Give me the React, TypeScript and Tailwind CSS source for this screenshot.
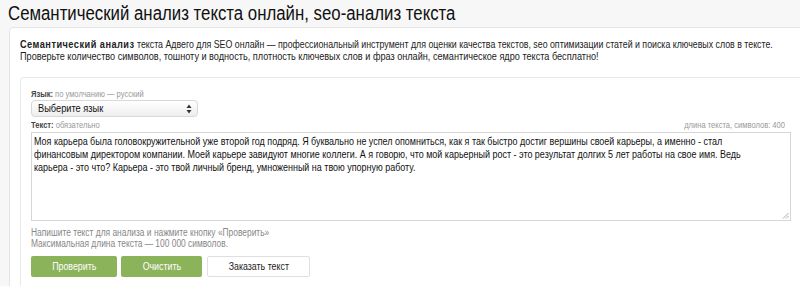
import React from "react";

const font = { fontFamily: "'Liberation Sans', Arial, sans-serif" };

export default function App() {
  return (
    <div className="w-[800px] h-[286px] overflow-hidden bg-[#f7f7f7] text-[#222]" style={font}>
      <div className="h-[27px] pl-[8px] pt-[2px] whitespace-nowrap">
        <h1 className="inline-block origin-left scale-x-[0.84] text-[20px] leading-[22px] text-[#111]">
          Семантический анализ текста онлайн, seo-анализ текста
        </h1>
      </div>
      <div className="ml-[9px] w-[820px] h-[300px] bg-white border border-[#e4e4e4] rounded-[4px] pl-[10px] pt-[10px]">
        <div className="text-[11px] leading-[12px] text-[#222] whitespace-nowrap">
          <p className="origin-left scale-x-[0.80]">
            <b className="text-[11.5px] tracking-[0.6px]">Семантический анализ</b> текста Адвего для SEO онлайн — профессиональный инструмент для оценки качества текстов, seo оптимизации статей и поиска ключевых слов в тексте.
          </p>
          <p className="origin-left scale-x-[0.83]">
            Проверьте количество символов, тошноту и водность, плотность ключевых слов и фраз онлайн, семантическое ядро текста бесплатно!
          </p>
        </div>
        <div className="mt-[15px] border border-[#e8e8e8] rounded-[4px] pl-[10px] pt-[9px] h-[260px]">
          <div className="h-[13px] flex items-center whitespace-nowrap">
            <span className="inline-block origin-left scale-x-[0.84] text-[9px] leading-[12px]">
              <b className="text-[#444]">Язык:</b>{" "}
              <span className="text-[#999]">по умолчанию — русский</span>
            </span>
          </div>
          <div className="w-[167px] h-[17px] rounded-[4px] border border-[#d8d8d8] bg-gradient-to-b from-white to-[#eeeeee] flex items-center justify-between pl-[6px] pr-[5px] text-[11px] text-[#111]">
            <span className="inline-block origin-left scale-x-[0.84]">Выберите язык</span>
            <svg width="6" height="10" viewBox="0 0 6 10">
              <path d="M3 0.5 L5.5 4 H0.5 Z" fill="#333" />
              <path d="M3 9.5 L5.5 6 H0.5 Z" fill="#333" />
            </svg>
          </div>
          <div className="flex justify-between items-center w-[754px] h-[15px] whitespace-nowrap text-[9px] leading-[12px]">
            <span className="inline-block origin-left scale-x-[0.84]">
              <b className="text-[#444]">Текст:</b>{" "}
              <span className="text-[#999]">обязательно</span>
            </span>
            <span className="inline-block origin-right scale-x-[0.84] text-[#999]">длина текста, символов: 400</span>
          </div>
          <div className="relative w-[760px] h-[89px] border border-[#d6d6d6] bg-white px-[2px] pt-[2px] text-[11px] leading-[13px] text-[#111] whitespace-nowrap">
            <div className="origin-left scale-x-[0.815]">
              Моя карьера была головокружительной уже второй год подряд. Я буквально не успел опомниться, как я так быстро достиг вершины своей карьеры, а именно - стал
              <br />
              финансовым директором компании. Моей карьере завидуют многие коллеги. А я говорю, что мой карьерный рост - это результат долгих 5 лет работы на свое имя. Ведь
              <br />
              карьера - это что? Карьера - это твой личный бренд, умноженный на твою упорную работу.
            </div>
            <svg className="absolute right-[1px] bottom-[1px]" width="7" height="7" viewBox="0 0 7 7">
              <path d="M6.5 1 L1 6.5 M6.5 4 L4 6.5" stroke="#aaa" strokeWidth="1" />
            </svg>
          </div>
          <div className="mt-[6px] origin-left scale-x-[0.84] text-[10px] leading-[11px] text-[#888] whitespace-nowrap">
            Напишите текст для анализа и нажмите кнопку «Проверить»
            <br />
            Максимальная длина текста — 100 000 символов.
          </div>
          <div className="mt-[7px] flex gap-[4px]">
            <button className="w-[86px] h-[21px] rounded-[2px] bg-[#8bb35a] text-white text-[10.5px]">
              <span className="inline-block scale-x-[0.84]">Проверить</span>
            </button>
            <button className="w-[81px] h-[21px] rounded-[2px] bg-[#8bb35a] text-white text-[10.5px]">
              <span className="inline-block scale-x-[0.84]">Очистить</span>
            </button>
            <button className="ml-[1px] w-[103px] h-[21px] rounded-[2px] bg-white border border-[#e0e0e0] text-[#222] text-[10.5px]">
              <span className="inline-block scale-x-[0.84]">Заказать текст</span>
            </button>
          </div>
        </div>
      </div>
    </div>
  );
}
